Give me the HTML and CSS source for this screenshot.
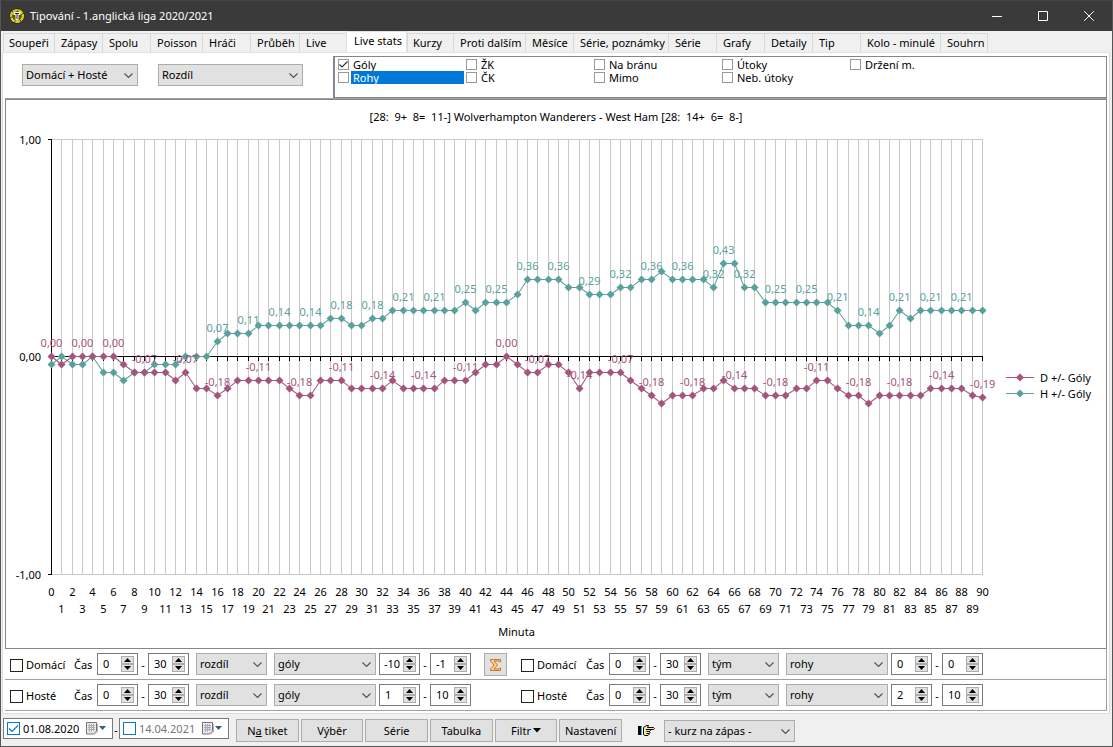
FILE: index.html
```html
<!DOCTYPE html>
<html lang="cs">
<head>
<meta charset="utf-8">
<title>Tipování - 1.anglická liga 2020/2021</title>
<link rel="stylesheet" href="styles.css">
</head>
<body>
<div class="window">
  <header class="titlebar">
    <svg class="app-icon" width="16" height="16" viewBox="0 0 16 16" aria-hidden="true">
      <circle cx="8" cy="8" r="7.5" fill="#1c1a06"/>
      <circle cx="8" cy="8" r="5.800" fill="none" stroke="#e3cc1c" stroke-width="2.600" stroke-dasharray="5 .6"/>
      <circle cx="8" cy="8" r="4.500" fill="#5d560e"/>
      <path d="M4.500 4h7v3h-2v5.500h-3V7h-2z" fill="#fff"/>
      <path d="M6 5.500h4M8 5.500v5.500" stroke="#222" stroke-width="1"/>
    </svg>
    <h1 class="caption">Tipování - 1.anglická liga 2020/2021</h1>
    <button class="win-btn" aria-label="Minimalizovat"><svg width="10" height="10" viewBox="0 0 10 10"><path d="M0 5.500h10"/></svg></button>
    <button class="win-btn" aria-label="Maximalizovat"><svg width="10" height="10" viewBox="0 0 10 10"><path d="M.5.5h9v9h-9z"/></svg></button>
    <button class="win-btn" aria-label="Zavřít"><svg width="10" height="10" viewBox="0 0 10 10"><path d="M.2.2l9.600 9.600M9.800.2L.2 9.800"/></svg></button>
  </header>

  <nav class="tabs" role="tablist">
    <button class="tab" role="tab">Soupeři</button>
    <button class="tab" role="tab">Zápasy</button>
    <button class="tab" role="tab">Spolu</button>
    <button class="tab" role="tab">Poisson</button>
    <button class="tab" role="tab">Hráči</button>
    <button class="tab" role="tab">Průběh</button>
    <button class="tab" role="tab">Live</button>
    <button class="tab tab-active" role="tab" aria-selected="true">Live stats</button>
    <button class="tab" role="tab">Kurzy</button>
    <button class="tab" role="tab">Proti dalším</button>
    <button class="tab" role="tab">Měsíce</button>
    <button class="tab" role="tab">Série, poznámky</button>
    <button class="tab" role="tab">Série</button>
    <button class="tab" role="tab">Grafy</button>
    <button class="tab" role="tab">Detaily</button>
    <button class="tab" role="tab">Tip</button>
    <button class="tab" role="tab">Kolo - minulé</button>
    <button class="tab" role="tab">Souhrn</button>
  </nav>

  <main class="page">
    <section class="options">
      <select class="combo combo-team" aria-label="Tým"><option>Domácí + Hosté</option></select>
      <select class="combo combo-mode" aria-label="Způsob"><option>Rozdíl</option></select>
      <div class="checklist">
        <label class="item"><input type="checkbox" class="tick" checked><span>Góly</span></label>
        <label class="item item-selected"><input type="checkbox" class="tick"><span>Rohy</span></label>
        <label class="item"><input type="checkbox" class="tick"><span>ŽK</span></label>
        <label class="item"><input type="checkbox" class="tick"><span>ČK</span></label>
        <label class="item"><input type="checkbox" class="tick"><span>Na bránu</span></label>
        <label class="item"><input type="checkbox" class="tick"><span>Mimo</span></label>
        <label class="item"><input type="checkbox" class="tick"><span>Útoky</span></label>
        <label class="item"><input type="checkbox" class="tick"><span>Neb. útoky</span></label>
        <label class="item"><input type="checkbox" class="tick"><span>Držení m.</span></label>
      </div>
    </section>

    <section class="chart">
      <h2 class="chart-title">[28:  9+  8=  11-] Wolverhampton Wanderers - West Ham [28:  14+  6=  8-]</h2>
      <div class="chart-body">
        <div class="plot" id="plot"></div>
        <ul class="legend">
          <li class="legend-item"><svg class="key key-home" width="28" height="9" viewBox="0 0 28 9"><path d="M0 4.500h28"/><path class="dot" d="M14 .5l4 4-4 4-4-4z"/></svg>D +/- Góly</li>
          <li class="legend-item"><svg class="key key-away" width="28" height="9" viewBox="0 0 28 9"><path d="M0 4.500h28"/><path class="dot" d="M14 .5l4 4-4 4-4-4z"/></svg>H +/- Góly</li>
        </ul>
      </div>
    </section>

    <form class="filters" id="filters"></form>
  </main>

  <footer class="toolbar">
    <div class="date">
      <input type="checkbox" class="box box-blue" aria-label="Datum od aktivní" checked>
      <input type="text" class="date-text" aria-label="Datum od" value="01.08.2020">
      <button class="date-btn" aria-label="Kalendář od"><svg width="21" height="13" viewBox="0 0 21 13"><path d="M.5.5h10v8.500l-3 3h-7z" fill="#eceaea" stroke="#776f70"/><path d="M2 3.500h7M2 5.500h7M2 7.500h7M3.500 2v8M5.500 2v8M7.500 2v7" stroke="#a9adb8"/><path d="M11.500 2v8l-3 2.500" fill="none" stroke="#b5b5b5"/><path d="M13 4h7l-3.500 4z" fill="#3c5886"/></svg></button>
    </div>
    <span class="sep sep-date">-</span>
    <div class="date date-off">
      <input type="checkbox" class="box box-blue" aria-label="Datum do aktivní">
      <input type="text" class="date-text" aria-label="Datum do" value="14.04.2021">
      <button class="date-btn" aria-label="Kalendář do"><svg width="21" height="13" viewBox="0 0 21 13"><path d="M.5.5h10v8.500l-3 3h-7z" fill="#eceaea" stroke="#776f70"/><path d="M2 3.500h7M2 5.500h7M2 7.500h7M3.500 2v8M5.500 2v8M7.500 2v7" stroke="#a9adb8"/><path d="M11.500 2v8l-3 2.500" fill="none" stroke="#b5b5b5"/><path d="M13 4h7l-3.500 4z" fill="#3c5886"/></svg></button>
    </div>
    <div class="actions">
      <button class="btn"><span>N<u>a</u> tiket</span></button>
      <button class="btn">Výběr</button>
      <button class="btn">Série</button>
      <button class="btn">Tabulka</button>
      <button class="btn">Filtr<svg width="8" height="5" viewBox="0 0 8 5"><path d="M0 0h8L4 4.500z" fill="#000"/></svg></button>
      <button class="btn">Nastavení</button>
    </div>
    <svg class="hand" width="17" height="11" viewBox="0 0 17 11" aria-hidden="true">
      <path d="M0 1h3v9H0z" fill="#000"/><path d="M3 1h1v9H3z" fill="#27b5c4"/><path d="M4 1h1v9H4z" fill="#fff"/>
      <path d="M5.500 2.500l3-2h2l-1 2h6l1 1-1 1h-4l1 1-1 1 .5 1-1 1v1l-1 1h-3l-1.500-1z" fill="#f5e79a" stroke="#000"/>
      <path d="M8 4.500h5M8.500 6.500h3M8.500 8.500h3" stroke="#000"/>
    </svg>
    <select class="combo combo-odds" aria-label="Kurz"><option>- kurz na zápas -</option></select>
  </footer>
</div>
<script src="app.js"></script>
</body>
</html>
```

FILE: styles.css
```css
* { box-sizing: border-box; }

body {
  margin: 0;
  font: 11px/16px "Noto Sans", "Open Sans", sans-serif;
  color: #000;
  background: #f0f0f0;
}

button, input, select { font: inherit; color: inherit; margin: 0; padding: 0; border-radius: 0; }

.window {
  display: flex;
  flex-direction: column;
  min-height: 100vh;
  border: 1px solid #555;
  border-top-color: #454545;
  background: #f0f0f0;
}

/* Title bar */
.titlebar { display: flex; align-items: center; height: 30px; padding-left: 8px; background: #3a3a3a; color: #fff; }
.app-icon { flex: none; }
.caption { flex: 1; margin: 0 0 0 5px; font-size: 11px; font-weight: 400; }
.win-btn { display: grid; place-items: center; width: 46px; height: 30px; border: 0; background: none; }
.win-btn path { fill: none; stroke: #fff; }

/* Tabs */
.tabs {
  display: grid;
  grid-template-columns: 51px 48px 48px 52px 48px 49px 47px 61px 46px 72px 48px 95px 48px 48px 48px 48px 80px 48px;
  align-items: end;
  height: 21px;
  padding: 0 0 0 2px;
}
.tab { height: 19px; padding: 0 0 0 6px; border: 1px solid #d9d9d9; border-width: 1px 0 0 1px; background: #f0f0f0; text-align: left; white-space: nowrap; }
.tab:first-child, .tab-active + .tab { padding-left: 5px; }
.tab:last-child { border-right-width: 1px; }
.tab-active { height: 21px; padding: 0 0 3px 7px; background: #fff; border-color: #e3e3e3; border-right-width: 1px; }

.page { flex: 1; display: flex; flex-direction: column; margin: 0 2px 0 1px; padding: 3px 2px 2px; background: #fff; border: 1px solid #dcdcdc; border-top-color: #e3e3e3; }

/* Options above the chart */
.options { display: flex; align-items: flex-start; padding-left: 17px; border-bottom: 1px solid #a0a0a0; }
.combo {
  appearance: none;
  height: 22px;
  padding: 0 18px 0 3px;
  border: 1px solid #adadad;
  background: #e1e1e1 url("data:image/svg+xml,%3Csvg xmlns='http://www.w3.org/2000/svg' width='9' height='5'%3E%3Cpath d='M.5.5l4 4 4-4' fill='none' stroke='%23505050' stroke-width='1.1'/%3E%3C/svg%3E") no-repeat right 4px center;
}
.combo-team { width: 116px; margin: 8px 20px 0 0; }
.combo-mode { width: 145px; margin: 8px 30px 0 0; }
.combo-odds { width: 131px; align-self: flex-end; }
.checklist {
  flex: 1;
  display: grid;
  grid-template-rows: repeat(2, 13px);
  grid-auto-columns: 128px;
  grid-auto-flow: column;
  height: 42px;
  padding: 1px 3px;
  border: 1px solid #828790;
  border-left-width: 2px;
}
.item { display: flex; align-items: center; gap: 2px; line-height: 13px; white-space: nowrap; padding-right: 2px; }
.item span { flex: 1; padding-left: 2px; }
.item-selected span { background: #0078d7; color: #fff; }
.tick, .box { appearance: none; flex: none; background: #fff center no-repeat; }
.tick { width: 11px; height: 11px; border: 1px solid #999; }
.tick:checked { background-image: url("data:image/svg+xml,%3Csvg xmlns='http://www.w3.org/2000/svg' width='9' height='9'%3E%3Cpath d='M.5 4.500l2.500 2.500 5.500-5.500' fill='none' stroke='%23333' stroke-width='1.2'/%3E%3C/svg%3E"); }
.box { width: 13px; height: 13px; border: 1px solid #222; }
.box-blue { border-color: #0078d7; }
.box-blue:checked { background-image: url("data:image/svg+xml,%3Csvg xmlns='http://www.w3.org/2000/svg' width='11' height='11'%3E%3Cpath d='M1 5.500l3 3 6-6' fill='none' stroke='%230078d7' stroke-width='1.2'/%3E%3C/svg%3E"); }

/* Chart */
.chart { flex: 1; display: flex; flex-direction: column; min-height: 320px; border: 1px solid #828790; }
.chart-title { margin: 0; padding-top: 9px; font-size: 11px; font-weight: 400; text-align: center; white-space: pre; }
.chart-body { flex: 1; display: flex; }
.plot { flex: 1; min-width: 0; display: grid; overflow: hidden; }
.plot svg { width: 100%; height: 100%; }
.plot text { font: 11px "Noto Sans", "Open Sans", sans-serif; text-anchor: middle; }
.plot .tick-y { text-anchor: end; }
.grid { stroke: #c8c8c8; fill: none; shape-rendering: crispEdges; }
.axis { stroke: #000; fill: none; shape-rendering: crispEdges; }
.line { fill: none; stroke-width: 1; }
.home { stroke: #a4557c; }
.away { stroke: #5aa09c; }
.home-fill { fill: #a4557c; }
.away-fill { fill: #5aa09c; }
.legend { flex: none; align-self: center; margin: 0; padding: 0 15px 2px 2px; list-style: none; }
.legend-item { display: flex; align-items: center; gap: 6px; white-space: nowrap; }
.key-home path { stroke: #a4557c; }
.key-away path { stroke: #5aa09c; }
.key-home .dot { fill: #a4557c; stroke: none; }
.key-away .dot { fill: #5aa09c; stroke: none; }

/* Filter rows */
.filters { margin: 0; }
.filter-row { display: flex; height: 31px; padding: 4px 0 0 5px; border: 1px solid #a0a0a0; border-width: 0 1px 1px 0; }
.filter-row > * { flex: none; }
.who { display: flex; align-items: center; gap: 3px; width: 64px; height: 24px; }
.who-second { width: 65px; }
.time { width: 23px; line-height: 24px; }
.spin { display: flex; width: 41px; height: 22px; border: 1px solid #7a7a7a; background: #fff; }
.spin input { width: 23px; height: 18px; padding-left: 5px; border: 0; background: none; outline: 0; appearance: textfield; }
.spin input::-webkit-inner-spin-button { appearance: none; }
.spin .wide { padding-left: 4px; }
.arrows { display: grid; grid-template-rows: 8px 8px; width: 13px; padding-top: 2px; }
.arrows button { display: grid; place-items: center; border: 1px solid #adadad; background: #e1e1e1; }
.sep { width: 10px; line-height: 24px; text-align: center; }
.combo-kind { width: 71px; margin: 0 7px; }
.combo-what { width: 102px; margin-right: 3px; }
.mid { width: 50px; padding-left: 13px; }
.sum { display: grid; place-items: center; width: 23px; height: 23px; border: 1px solid #adadad; background: #e1e1e1; }

/* Bottom toolbar */
.toolbar { display: flex; align-items: flex-start; height: 32px; padding: 4px 2px; }
.toolbar > * { flex: none; }
.date { display: flex; align-items: center; width: 110px; height: 21px; padding-left: 3px; border: 1px solid #7a7a7a; background: #fff; }
.date-off .date-text { color: #777; }
.date-text { width: 66px; height: 19px; padding-left: 3px; border: 0; background: none; outline: 0; }
.date-btn { display: grid; place-items: center; width: 21px; height: 19px; border: 0; background: none; }
.sep-date { width: 6px; }
.actions { display: grid; grid-template-columns: repeat(6, 1fr); gap: 2px; width: 386px; margin: 1px 0 0 7px; }
.btn { display: flex; align-items: center; justify-content: center; gap: 2px; height: 23px; border: 1px solid #adadad; background: #e1e1e1; white-space: nowrap; }
.hand { margin: 7px 9px 0 16px; }
```

FILE: app.js
```js
// Goal difference per minute, in matches out of 28.
const MATCHES = 28;
const home = [0,-1,0,0,0,0,0,-1,-2,-2,-2,-2,-3,-2,-4,-4,-5,-4,-3,-3,-3,-3,-3,-4,-5,-5,-3,-3,-3,-4,-4,-4,-4,-3,-4,-4,-4,-4,-3,-3,-3,-2,-1,-1,0,-1,-2,-2,-1,-1,-2,-4,-2,-2,-2,-2,-3,-4,-5,-6,-5,-5,-5,-4,-4,-3,-4,-4,-4,-5,-5,-5,-4,-4,-3,-3,-4,-5,-5,-6,-5,-5,-5,-5,-5,-4,-4,-4,-4,-5,-5.25];
const away = [-1,0,-1,-1,0,-2,-2,-3,-2,-2,-1,-1,-1,0,0,0,2,3,3,3,4,4,4,4,4,4,4,5,5,4,4,5,5,6,6,6,6,6,6,6,7,6,7,7,7,8,10,10,10,10,9,9,8,8,8,9,9,10,10,11,10,10,10,10,9,12,12,9,9,7,7,7,7,7,7,7,6,4,4,4,3,4,6,5,6,6,6,6,6,6,6];
const homeLabels = [0,3,6,9,13,16,20,24,28,32,36,40,44,47,51,55,58,62,66,70,74,78,82,86,90];
const awayLabels = [16,19,22,25,28,31,34,37,40,43,46,49,52,55,58,61,64,65,67,70,73,76,79,82,85,88];

const comma = v => v.toFixed(2).replace('.', ',');

function drawChart() {
  const host = document.getElementById('plot');
  host.innerHTML = '';
  const w = host.clientWidth, h = host.clientHeight;
  const left = 45, right = w - 22, top = 14, bottom = h - 74;
  const zero = Math.floor((top + bottom) / 2) + 0.95;
  const x = m => Math.round(left + (right - left) * m / 90) + 0.5;
  const y = n => Math.floor(zero - (bottom - top) / 2 * n / MATCHES) + 0.5;
  const yAt = v => y(v * MATCHES);
  let grid = `M${x(0)} ${yAt(1)}H${x(90)}M${x(0)} ${yAt(-1)}H${x(90)}`;
  let axis = `M${x(0)} ${yAt(1)}V${yAt(-1)}M${x(0)} ${yAt(0)}H${x(90)}`;
  let text = '';
  for (let m = 0; m <= 90; m++) {
    if (m) grid += `M${x(m)} ${yAt(1)}V${yAt(-1)}`;
    axis += `M${x(m)} ${yAt(0)}v4`;
    text += `<text x="${x(m)}" y="${bottom + (m % 2 ? 39 : 22)}">${m}</text>`;
  }
  for (const v of [1, 0, -1]) {
    axis += `M${x(0)} ${yAt(v)}h-4`;
    text += `<text class="tick-y" x="${left - 10}" y="${yAt(v) + 4}">${comma(v)}</text>`;
  }
  text += `<text x="${(left + right) / 2}" y="${bottom + 62}">Minuta</text>`;
  const series = (data, cls) =>
    `<polyline class="line ${cls}" points="${data.map((n, m) => x(m) + ',' + y(n)).join(' ')}"/>` +
    `<path class="${cls}-fill" d="${data.map((n, m) => `M${x(m)} ${y(n) - 4}l4 4-4 4-4-4z`).join('')}"/>`;
  const labels = (data, at, cls) => at.map(m =>
    `<text class="${cls}-fill" x="${x(m)}" y="${y(data[m]) - 10}">${comma(data[m] / MATCHES)}</text>`).join('');
  host.innerHTML = `<svg viewBox="0 0 ${w} ${h}"><path class="grid" d="${grid}"/><path class="axis" d="${axis}"/>` +
    series(away, 'away') + series(home, 'home') +
    labels(away, awayLabels, 'away') + labels(home, homeLabels, 'home') + text + '</svg>';
}

const arrow = (d, name) => `<button type="button" aria-label="${name}"><svg width="7" height="4" viewBox="0 0 7 4"><path d="${d}"/></svg></button>`;
const spin = (v, name) => `<div class="spin"><input type="number" aria-label="${name}" value="${v}"${String(v).length > 2 ? ' class="wide"' : ''}>` +
  `<div class="arrows">${arrow('M0 4h7L3.500 0z', 'Více')}${arrow('M0 0h7L3.500 4z', 'Méně')}</div></div>`;
const range = (a, b, name) => spin(a, name + ' od') + '<span class="sep">-</span>' + spin(b, name + ' do');
const combo = (v, cls, name) => `<select class="combo ${cls}" aria-label="${name}"><option>${v}</option></select>`;
const group = (who, kind, what, from, to, second) =>
  `<label class="who${second ? ' who-second' : ''}"><input type="checkbox" class="box">${who}</label><span class="time">Čas</span>` +
  range(0, 30, 'Čas') + combo(kind, 'combo-kind', 'Druh') + combo(what, 'combo-what', 'Údaj') + range(from, to, 'Hodnota');
const sum = '<button type="button" class="sum" aria-label="Součet"><svg width="13" height="14" viewBox="0 0 13 14"><path d="M1.500 1.500h10v2.500h-1l-1-1H5L8.500 7 5 11h4.500l1-1h1v2.500h-10V11L5 7 1.500 3z" fill="#fbd08a" stroke="#c8742a"/></svg></button>';

document.getElementById('filters').innerHTML =
  `<div class="filter-row">${group('Domácí', 'rozdíl', 'góly', -10, -1)}<div class="mid">${sum}</div>${group('Domácí', 'tým', 'rohy', 0, 0, true)}</div>` +
  `<div class="filter-row">${group('Hosté', 'rozdíl', 'góly', 1, 10)}<div class="mid"></div>${group('Hosté', 'tým', 'rohy', 2, 10, true)}</div>`;

drawChart();
window.addEventListener('resize', drawChart);
```
